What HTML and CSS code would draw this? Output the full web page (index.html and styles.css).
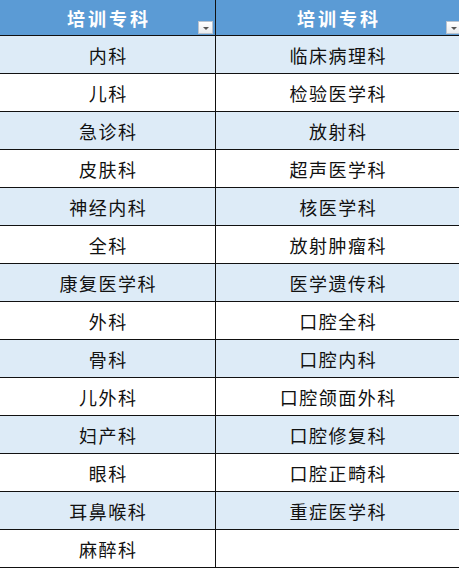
FILE: index.html
```html
<!DOCTYPE html>
<html lang="zh">
<head>
<meta charset="utf-8">
<link rel="stylesheet" href="styles.css">
</head>
<body>
<div class="sheet">
  <div class="cell head left">培训专科<span class="filter"></span></div>
  <div class="cell head">培训专科<span class="filter"></span></div>

  <div class="cell band left">内科</div><div class="cell band">临床病理科</div>
  <div class="cell left">儿科</div><div class="cell">检验医学科</div>
  <div class="cell band left">急诊科</div><div class="cell band">放射科</div>
  <div class="cell left">皮肤科</div><div class="cell">超声医学科</div>
  <div class="cell band left">神经内科</div><div class="cell band">核医学科</div>
  <div class="cell left">全科</div><div class="cell">放射肿瘤科</div>
  <div class="cell band left">康复医学科</div><div class="cell band">医学遗传科</div>
  <div class="cell left">外科</div><div class="cell">口腔全科</div>
  <div class="cell band left">骨科</div><div class="cell band">口腔内科</div>
  <div class="cell left">儿外科</div><div class="cell">口腔颌面外科</div>
  <div class="cell band left">妇产科</div><div class="cell band">口腔修复科</div>
  <div class="cell left">眼科</div><div class="cell">口腔正畸科</div>
  <div class="cell band left">耳鼻喉科</div><div class="cell band">重症医学科</div>
  <div class="cell left">麻醉科</div><div class="cell"></div>
</div>
</body>
</html>
```

FILE: styles.css
```css
html, body {
  margin: 0;
  padding: 0;
  background: #ffffff;
  overflow: hidden;
}

.sheet {
  width: 459px;
  display: grid;
  grid-template-columns: 216px 243px;
  grid-auto-rows: 38px;
  font-family: "Microsoft YaHei", "Noto Sans CJK SC", "Noto Sans", sans-serif;
  overflow: hidden;
}

.cell {
  box-sizing: border-box;
  border-bottom: 1px solid #111111;
  display: flex;
  align-items: center;
  justify-content: center;
  font-size: 18px;
  letter-spacing: 1.5px;
  padding-left: 1.5px;
  color: #111111;
  position: relative;
  background: #ffffff;
}

.left {
  border-right: 1px solid #111111;
}

.band {
  background: #ddebf7;
}

.head {
  height: 36px;
  background: #5b9bd5;
  color: #ffffff;
  font-weight: bold;
  letter-spacing: 3px;
  padding-left: 3px;
}

.sheet .head:nth-child(-n+2) {
  grid-row: 1;
}

.sheet {
  grid-template-rows: 36px;
}

.filter {
  position: absolute;
  top: 21px;
  right: 2px;
  width: 15px;
  height: 13px;
  box-sizing: border-box;
  border: 1px solid #b9c3cf;
  background: linear-gradient(#ffffff, #e9ecef);
}

.head:not(.left) .filter {
  right: -2px;
}

.filter::after {
  content: "";
  position: absolute;
  left: 4px;
  top: 5px;
  border-left: 3px solid transparent;
  border-right: 3px solid transparent;
  border-top: 3px solid #555555;
}
```
